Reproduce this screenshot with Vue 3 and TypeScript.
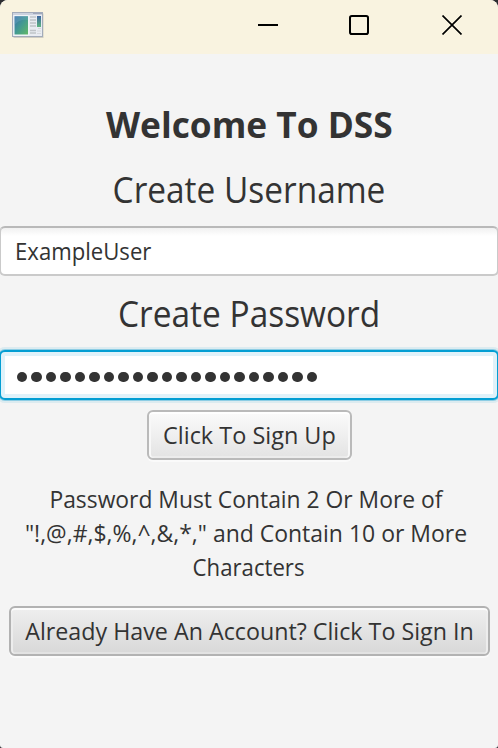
<script setup lang="ts">
import { ref } from 'vue'

const username = ref('ExampleUser')
const passwordLength = ref(21)
</script>

<template>
  <div class="window">
    <header class="titlebar">
      <svg class="app-icon" width="34" height="28" viewBox="0 0 34 28">
        <defs>
          <linearGradient id="pane" x1="0" y1="0" x2="1" y2="1">
            <stop offset="0" stop-color="#3b6fae" />
            <stop offset=".5" stop-color="#439a91" />
            <stop offset="1" stop-color="#62b866" />
          </linearGradient>
          <linearGradient id="strip" x1="0" y1="0" x2="0" y2="1">
            <stop offset="0" stop-color="#3c659f" />
            <stop offset="1" stop-color="#5eb580" />
          </linearGradient>
        </defs>
        <rect x="1.5" y="1.5" width="30" height="24.5" fill="#d0cdc2" />
        <rect x=".5" y=".5" width="30" height="24" fill="#e9ecf2" stroke="#a3abba" />
        <path d="M1 2H30" stroke="#ccd2df" stroke-width="2" />
        <path d="M21 1.3H30" stroke="#a1a9bb" stroke-width="1.5" />
        <rect x="2" y="3.5" width="14.5" height="20" fill="#f7f9fb" />
        <rect x="2.5" y="4.2" width="13.5" height="18.3" fill="url(#pane)" />
        <path d="M2.5 13Q7 7 16 8V4.2H2.5Z" fill="#79b4c8" opacity=".3" />
        <path d="M18 5h6M18 8h6M18 11h6M18 14h6M18 18.5h6M18 21h6" stroke="#bfc3c8" stroke-width="1.3" />
        <rect x="25" y="4" width="4" height="11" fill="url(#strip)" />
        <path d="M26 16.5h3M25 19h4M25 21.5h4" stroke="#d5d8dc" />
      </svg>
      <div class="controls">
        <svg width="20" height="20" viewBox="0 0 20 20"><path d="M0 10H20" /></svg>
        <svg width="20" height="20" viewBox="0 0 20 20"><rect x="1" y="1" width="18" height="18" rx="1.8" /></svg>
        <svg class="close" width="20" height="20" viewBox="0 0 20 20"><path d="M.5 .5L19.5 19.5M19.5 .5L.5 19.5" /></svg>
      </div>
    </header>
    <main class="form">
      <h1 class="heading title">Welcome To DSS</h1>
      <h2 class="heading user-label">Create Username</h2>
      <div class="field"><span class="name">{{ username }}</span></div>
      <h2 class="heading pass-label">Create Password</h2>
      <div class="field focused">
        <span class="dots"><i v-for="n in passwordLength" :key="n" class="dot"></i></span>
      </div>
      <button class="button signup"><span class="signup-text">Click To Sign Up</span></button>
      <p class="hint">
        <span class="hint-first">Password Must Contain 2 Or More of</span>
        <span class="hint-second">"!,@,#,$,%,^,&amp;,*," and Contain 10 or More</span>
        <span class="hint-third">Characters</span>
      </p>
      <button class="button signin"><span class="signin-text">Already Have An Account? Click To Sign In</span></button>
    </main>
  </div>
</template>

<style>
body {
  background: #2d2d31;
}
</style>

<style scoped>
.window {
  width: 498px;
  height: 748px;
  overflow: hidden;
  box-sizing: border-box;
  border-radius: 8px 8px 3px 3px;
  background: #f4f4f4;
  color: #333;
  font-family: "Open Sans", "Noto Sans", sans-serif;
  font-size: 24px;
}
.titlebar {
  display: flex;
  justify-content: space-between;
  align-items: flex-start;
  height: 54px;
  padding: 12px 36px 0 12px;
  box-sizing: border-box;
  background: #f9f3e0;
}
.controls {
  display: flex;
  gap: 71px;
  padding-top: 3px;
}
.controls svg {
  fill: none;
  stroke: #000;
  stroke-width: 2;
}
.controls .close {
  margin-left: 2px;
  stroke-width: 1.7;
}
.form {
  display: flex;
  flex-direction: column;
  align-items: center;
}
.heading {
  margin: 0;
  height: 48px;
  line-height: 48px;
  font-size: 36px;
  font-weight: 400;
  white-space: nowrap;
}
.title {
  margin-top: 48px;
  font-weight: 700;
  transform: translateY(-1px) scaleX(.98);
}
.user-label {
  margin-top: 16px;
  transform: translateY(-.5px) scaleX(.928);
}
.field {
  display: flex;
  align-items: center;
  flex-shrink: 0;
  width: 500px;
  height: 50px;
  margin-top: 12px;
  padding: 0 14px;
  box-sizing: border-box;
  border: 2px solid #cacaca;
  border-top-color: #b9b9b9;
  border-radius: 6px;
  background: linear-gradient(#f1f1f1, #fff 8px);
}
.name {
  transform: translateY(-1px) scaleX(.922);
  transform-origin: 0 50%;
}
.pass-label {
  margin-top: 14px;
  transform: translateY(-.5px) scaleX(.929);
}
.focused {
  border-color: #039ed3;
  background: #fff;
  box-shadow: inset 0 0 0 4px #dff2fa, 0 0 0 1px #8dcde4, 0 0 0 3px #dcebf0;
}
.dots {
  display: flex;
  gap: 4.2px;
  padding: 4px 0 0 2px;
}
.dot {
  width: 10.3px;
  height: 10.3px;
  border-radius: 50%;
  background: #333;
}
.button {
  display: flex;
  align-items: center;
  justify-content: center;
  height: 50px;
  padding: 0;
  border: 2px solid #bababa;
  border-radius: 6px;
  color: #333;
  font: inherit;
  white-space: nowrap;
  background: linear-gradient(#fbfbfb, #e3e3e3);
  box-shadow: inset 0 2px #fff, inset 2px 0 #f8f8f8, inset -2px 0 #f8f8f8, inset 0 -2px #ececec, 0 2px #fafafa;
}
.signup {
  width: 205px;
  margin-top: 10px;
}
.signup-text {
  transform: translateY(-1px) scaleX(.977);
}
.hint {
  display: flex;
  flex-direction: column;
  align-items: center;
  margin: 22px 0 0;
  line-height: 34px;
  white-space: nowrap;
}
.hint-first {
  transform: translateX(-3.5px) scaleX(.952);
}
.hint-second {
  transform: translateX(-3px) scaleX(.957);
}
.hint-third {
  transform: scaleX(.924);
}
.signin {
  width: 481px;
  margin-top: 22px;
  border-color: #b2b2b2;
  background: linear-gradient(#efefef, #d8d8d8);
  box-shadow: inset 0 2px #fcfcfc, inset 2px 0 #ededed, inset -2px 0 #ededed, inset 0 -2px #e2e2e2, 0 2px #fafafa;
}
.signin-text {
  transform: translateY(-1px) scaleX(.969);
}
</style>
